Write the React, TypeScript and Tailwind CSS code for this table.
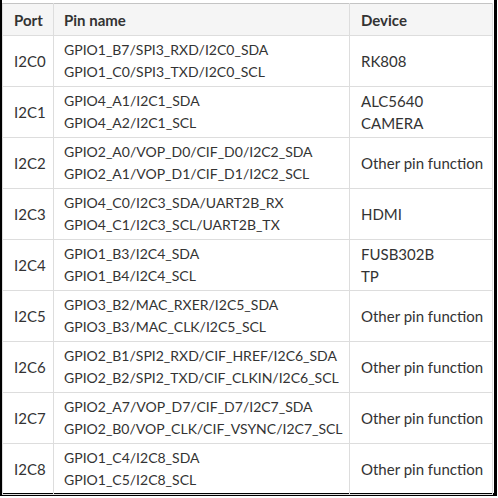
import React from "react";

const rows = [
  { port: "I2C0", pins: ["GPIO1_B7/SPI3_RXD/I2C0_SDA", "GPIO1_C0/SPI3_TXD/I2C0_SCL"], device: ["RK808"] },
  { port: "I2C1", pins: ["GPIO4_A1/I2C1_SDA", "GPIO4_A2/I2C1_SCL"], device: ["ALC5640", "CAMERA"] },
  { port: "I2C2", pins: ["GPIO2_A0/VOP_D0/CIF_D0/I2C2_SDA", "GPIO2_A1/VOP_D1/CIF_D1/I2C2_SCL"], device: ["Other pin function"] },
  { port: "I2C3", pins: ["GPIO4_C0/I2C3_SDA/UART2B_RX", "GPIO4_C1/I2C3_SCL/UART2B_TX"], device: ["HDMI"] },
  { port: "I2C4", pins: ["GPIO1_B3/I2C4_SDA", "GPIO1_B4/I2C4_SCL"], device: ["FUSB302B", "TP"] },
  { port: "I2C5", pins: ["GPIO3_B2/MAC_RXER/I2C5_SDA", "GPIO3_B3/MAC_CLK/I2C5_SCL"], device: ["Other pin function"] },
  { port: "I2C6", pins: ["GPIO2_B1/SPI2_RXD/CIF_HREF/I2C6_SDA", "GPIO2_B2/SPI2_TXD/CIF_CLKIN/I2C6_SCL"], device: ["Other pin function"] },
  { port: "I2C7", pins: ["GPIO2_A7/VOP_D7/CIF_D7/I2C7_SDA", "GPIO2_B0/VOP_CLK/CIF_VSYNC/I2C7_SCL"], device: ["Other pin function"] },
  { port: "I2C8", pins: ["GPIO1_C4/I2C8_SDA", "GPIO1_C5/I2C8_SCL"], device: ["Other pin function"] },
];

export default function App() {
  return (
    <div className="w-[498px] h-[498px] bg-white">
      <div className="w-[497px] h-[496px] border-l-2 border-r-[3px] border-b-[3px] border-black pt-[3px]">
        <table
          className="w-[491px] h-[490px] table-fixed border-collapse text-[15px] leading-[22px] text-[#333]"
          style={{ fontFamily: "Lato, 'Noto Sans', sans-serif" }}
        >
          <colgroup>
            <col className="w-[51px]" />
            <col className="w-[296px]" />
            <col />
          </colgroup>
          <thead>
            <tr className="bg-[#f5f5f5] h-[32px]">
              <th className="border border-[#ddd] border-t-[#c4c4c4] px-[11px] text-left font-bold">Port</th>
              <th className="border border-[#ddd] border-t-[#c4c4c4] px-[10px] text-left font-bold">Pin name</th>
              <th className="border border-[#ddd] border-t-[#c4c4c4] px-[11px] text-left font-bold">Device</th>
            </tr>
          </thead>
          <tbody>
            {rows.map((r) => (
              <tr key={r.port}>
                <td className="border border-[#ddd] px-[11px] py-[3px]">{r.port}</td>
                <td className="border border-[#ddd] px-[10px] py-[3px] whitespace-nowrap text-[14px]">
                  {r.pins.map((p) => (
                    <div key={p}>{p}</div>
                  ))}
                </td>
                <td className="border border-[#ddd] px-[11px] py-[3px] whitespace-nowrap">
                  {r.device.map((d) => (
                    <div key={d}>{d}</div>
                  ))}
                </td>
              </tr>
            ))}
          </tbody>
        </table>
      </div>
    </div>
  );
}
